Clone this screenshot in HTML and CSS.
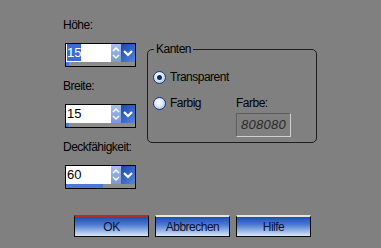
FILE: index.html
```html
<!DOCTYPE html>
<html lang="de">
<head>
    <meta charset="UTF-8">
    <title>Rand</title>
    <link rel="stylesheet" href="styles.css">
</head>
<body>
    <div class="dialog">
        <div class="main">
            <!-- Left column: spin fields -->
            <div class="fields">
                <div class="field">
                    <div class="label">Höhe:</div>
                    <div class="spin">
                        <div class="spin-row">
                            <span class="spin-value"><span class="selected">15</span></span>
                            <span class="spin-arrows">
                                <svg width="10" height="18" viewBox="0 0 10 18"><path d="M2 7 L5 4 L8 7 M2 11 L5 14 L8 11" fill="none" stroke="#fff" stroke-width="1.5"/></svg>
                            </span>
                            <span class="spin-drop">
                                <svg width="14" height="18" viewBox="0 0 14 18"><path d="M3 7 L7 11 L11 7" fill="none" stroke="#fff" stroke-width="2.2"/></svg>
                            </span>
                        </div>
                        <div class="spin-bar"><span class="spin-fill" style="width:3px"></span></div>
                    </div>
                </div>
                <div class="field">
                    <div class="label">Breite:</div>
                    <div class="spin">
                        <div class="spin-row">
                            <span class="spin-value">15</span>
                            <span class="spin-arrows">
                                <svg width="10" height="18" viewBox="0 0 10 18"><path d="M2 7 L5 4 L8 7 M2 11 L5 14 L8 11" fill="none" stroke="#fff" stroke-width="1.5"/></svg>
                            </span>
                            <span class="spin-drop">
                                <svg width="14" height="18" viewBox="0 0 14 18"><path d="M3 7 L7 11 L11 7" fill="none" stroke="#fff" stroke-width="2.2"/></svg>
                            </span>
                        </div>
                        <div class="spin-bar"><span class="spin-fill" style="width:3px"></span></div>
                    </div>
                </div>
                <div class="field">
                    <div class="label">Deckfähigkeit:</div>
                    <div class="spin">
                        <div class="spin-row">
                            <span class="spin-value">60</span>
                            <span class="spin-arrows">
                                <svg width="10" height="18" viewBox="0 0 10 18"><path d="M2 7 L5 4 L8 7 M2 11 L5 14 L8 11" fill="none" stroke="#fff" stroke-width="1.5"/></svg>
                            </span>
                            <span class="spin-drop">
                                <svg width="14" height="18" viewBox="0 0 14 18"><path d="M3 7 L7 11 L11 7" fill="none" stroke="#fff" stroke-width="2.2"/></svg>
                            </span>
                        </div>
                        <div class="spin-bar"><span class="spin-fill" style="width:37px"></span></div>
                    </div>
                </div>
            </div>

            <!-- Kanten group -->
            <fieldset class="group">
                <legend>Kanten</legend>
                <div class="radio-row">
                    <span class="radio checked"></span>
                    <span>Transparent</span>
                </div>
                <div class="color-row">
                    <div class="radio-row radio-col">
                        <span class="radio"></span>
                        <span>Farbig</span>
                    </div>
                    <div class="color-col">
                        <div class="label">Farbe:</div>
                        <div class="color-box">808080</div>
                    </div>
                </div>
            </fieldset>
        </div>

        <!-- Buttons -->
        <div class="buttons">
            <button class="btn btn-default">OK</button>
            <button class="btn">Abbrechen</button>
            <button class="btn">Hilfe</button>
        </div>
    </div>
</body>
</html>
```

FILE: styles.css
```css
/* General Styles */
body {
    margin: 0;
    background-color: #808080;
    font-family: 'Liberation Sans', Arial, sans-serif;
    font-size: 12px;
    letter-spacing: -0.5px;
    color: #000;
}

.dialog {
    display: flex;
    flex-direction: column;
    padding: 18px 0 0 63px;
}

.main {
    display: flex;
    gap: 11px;
}

/* Spin fields */
.fields {
    display: flex;
    flex-direction: column;
    gap: 12px;
    width: 73px;
}

.label {
    line-height: 15px;
}

.field .label {
    margin-bottom: 10px;
}

.spin {
    margin-left: 2px;
    width: 71px;
    border: 1px solid #000;
    box-sizing: border-box;
    background-color: #8c8c8c;
}

.spin-row {
    display: flex;
    height: 18px;
}

.spin-value {
    width: 45px;
    background-color: #fff;
    font-size: 13px;
    letter-spacing: 0;
    line-height: 18px;
    padding-left: 1px;
    box-sizing: border-box;
}

.spin-value .selected {
    background-color: #3a6cd4;
    color: #fff;
    padding: 1px 0;
}

.spin-arrows {
    width: 10px;
    background: linear-gradient(#a8c0ea, #7898d4);
}

.spin-drop {
    width: 14px;
    background: linear-gradient(135deg, #1a48a8, #3c6cc8 60%, #5a86d4);
}

.spin-arrows svg,
.spin-drop svg {
    display: block;
}

.spin-bar {
    height: 4px;
    display: flex;
}

.spin-fill {
    background-color: #4a7ad8;
}

/* Group box */
.group {
    align-self: flex-start;
    margin: 24px 0 0 0;
    padding: 0 0 5px 5px;
    width: 170px;
    box-sizing: border-box;
    border: 1px solid #1e1e1e;
    border-radius: 5px;
}

.group legend {
    padding: 0 2px;
    margin-left: 1px;
    line-height: 15px;
}

.radio-row {
    display: flex;
    align-items: center;
    gap: 4px;
    line-height: 15px;
}

.group > .radio-row {
    margin-top: 13px;
}

.color-row {
    display: flex;
    margin-top: 11px;
}

.radio-col {
    width: 83px;
    align-self: flex-start;
}

.radio {
    width: 13px;
    height: 13px;
    box-sizing: border-box;
    border-radius: 50%;
    border: 1px solid #1c3a7a;
    background: radial-gradient(circle at 45% 40%, #ffffff 0, #dce8fa 45%, #8eaae0 100%);
    display: flex;
    align-items: center;
    justify-content: center;
}

.radio.checked::after {
    content: '';
    width: 5px;
    height: 5px;
    border-radius: 50%;
    background-color: #0e2a66;
}

.color-col .label {
    margin-bottom: 2px;
}

.color-box {
    width: 55px;
    height: 24px;
    box-sizing: border-box;
    border: 1px solid;
    border-color: #5e5e5e #d0d0d0 #d0d0d0 #5e5e5e;
    font-style: italic;
    font-size: 13px;
    letter-spacing: 0.3px;
    line-height: 22px;
    color: #2a2a2a;
    text-align: center;
}

/* Buttons */
.buttons {
    display: flex;
    gap: 6px;
    margin: 26px 0 0 11px;
}

.btn {
    width: 75px;
    height: 22px;
    padding: 0;
    border: 1px solid #0a0a0a;
    border-top: 2px solid #e4e4e4;
    background: linear-gradient(#1c4eb4, #4a7ad0 40%, #dbe6f8);
    font-family: inherit;
    font-size: 12px;
    letter-spacing: -0.5px;
    color: #0a1030;
}

.btn-default {
    border-top-color: #a83030;
}
```
